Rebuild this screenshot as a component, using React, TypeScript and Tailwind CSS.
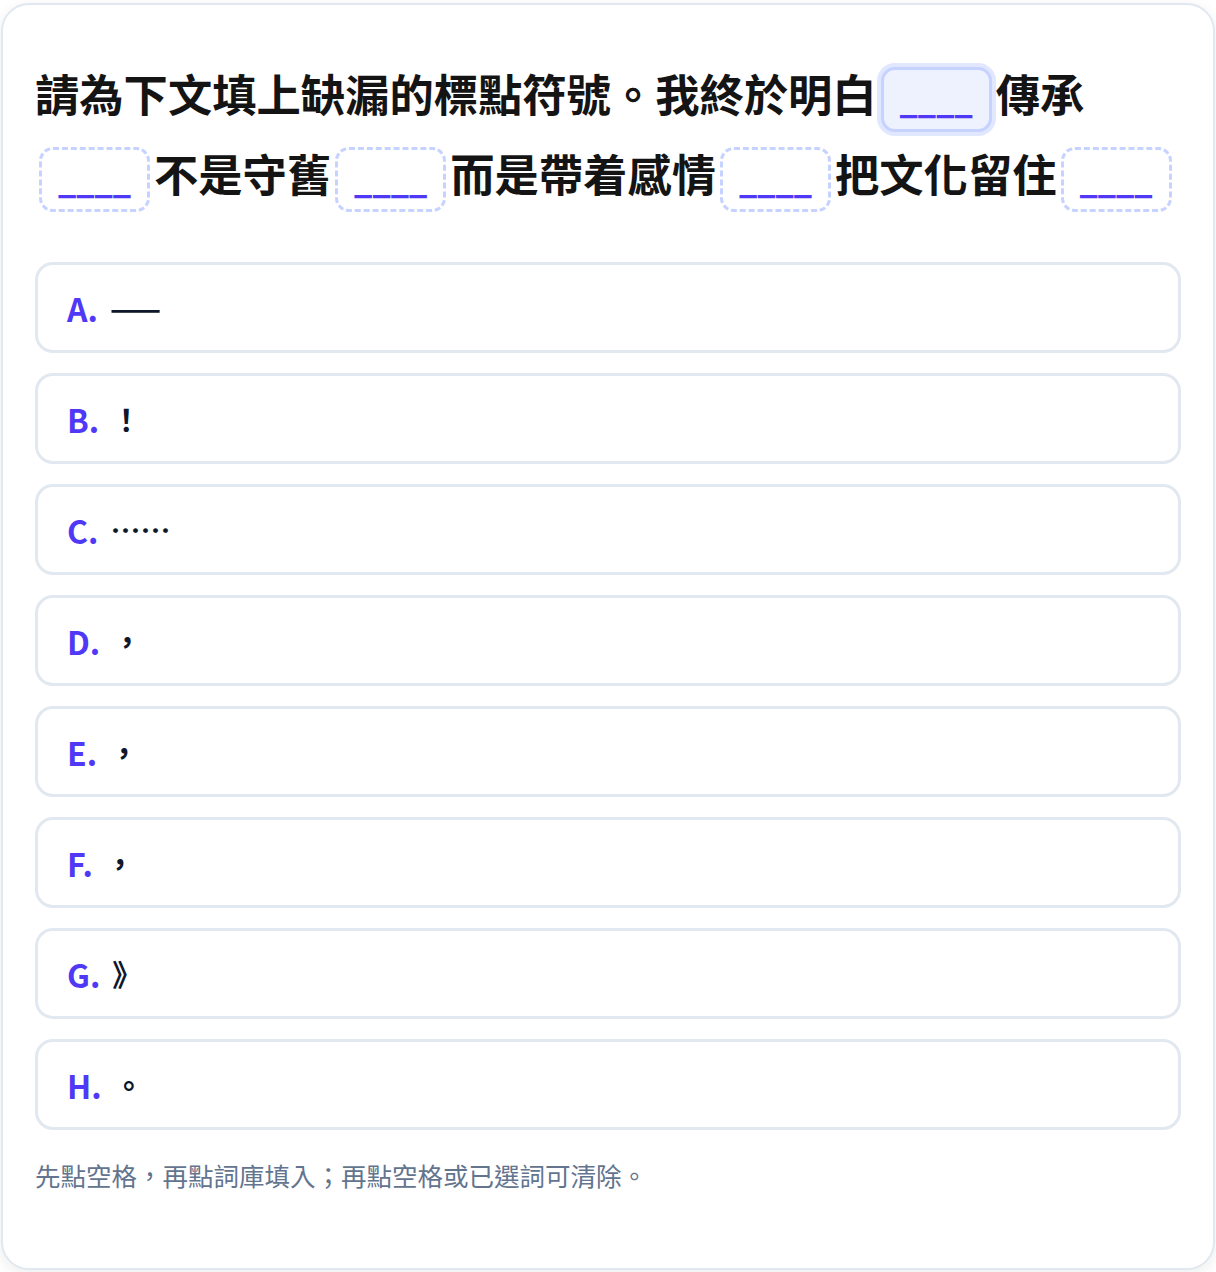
import React from "react";

const FONT = '"Noto Sans CJK TC", "Noto Sans", sans-serif';

function Blank({ active = false }: { active?: boolean }) {
  return (
    <span
      className={
        "mx-[4px] inline-flex h-[65px] w-[111px] items-end justify-center rounded-[14px] border-[3px] pb-[12px] align-middle text-[32px] leading-none font-black text-indigo-600 " +
        (active
          ? "border-solid border-indigo-200 bg-indigo-50 ring-4 ring-indigo-100"
          : "border-dashed border-indigo-200 bg-white")
      }
    >
      <span className="relative top-[-2px]">____</span>
    </span>
  );
}

const options: [string, string][] = [
  ["A.", "——"],
  ["B.", "！"],
  ["C.", "……"],
  ["D.", "，"],
  ["E.", "，"],
  ["F.", "，"],
  ["G.", "》"],
  ["H.", "。"],
];

export default function App() {
  return (
    <div className="min-h-screen bg-white" style={{ fontFamily: FONT }}>
      <div className="ml-[1px] mt-[3px] h-[1267px] w-[1214px] rounded-[28px] border-2 border-slate-200 bg-white px-[32px] pt-[48px] shadow-[0_4px_14px_rgba(15,23,42,0.08)]">
        <div className="text-[44.3px] font-bold leading-[80px] text-[#141414]">
          請為下文填上缺漏的標點符號。我終於明白
          <Blank active />
          傳承
          <Blank />
          不是守舊
          <Blank />
          而是帶着感情
          <Blank />
          把文化留住
          <Blank />
        </div>
        <div className="mt-[49px] flex flex-col gap-[20px]">
          {options.map(([k, v]) => (
            <div
              key={k}
              className="flex h-[91px] items-center gap-3 rounded-[18px] border-[3px] border-slate-200 bg-white px-[29px]"
            >
              <span className="text-[32px] font-bold text-indigo-600">{k}</span>
              <span className="text-[30px] font-bold text-slate-900">{v}</span>
            </div>
          ))}
        </div>
        <p className="mt-[26px] text-[25.5px] text-slate-500">
          先點空格，再點詞庫填入；再點空格或已選詞可清除。
        </p>
      </div>
    </div>
  );
}
